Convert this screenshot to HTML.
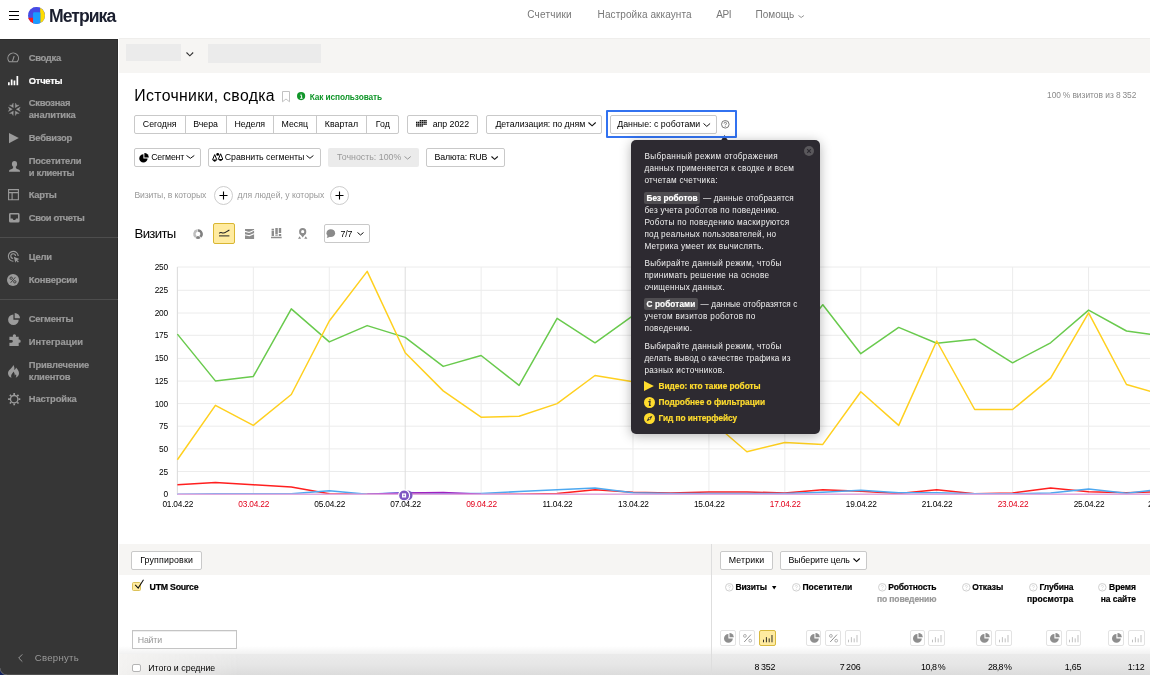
<!DOCTYPE html>
<html lang="ru"><head><meta charset="utf-8"><title>Источники, сводка — Яндекс Метрика</title>
<style>
*{box-sizing:border-box;margin:0;padding:0}
html,body{width:1150px;height:675px;overflow:hidden;background:#fff}
body{font-family:"Liberation Sans",sans-serif;color:#000}
#app{position:relative;width:1150px;height:675px;overflow:hidden;background:#fff;will-change:transform}
#app div,#app span,#app svg.a,#app a,#app button,#app label,#app h1,#app h2,#app input,#app i{position:absolute}
header,aside,main,nav,section{display:block}
.t{white-space:pre;line-height:1;display:block}
svg.a{overflow:visible}
.btn{background:#fff;border:1px solid #c9c9c9;border-radius:2px}
.btn.dis{background:#ebebeb;border:0}
.side-bg{background:#363636}
.sep{background:#4d4d4d;height:1px}
.grayband{background:#f6f5f3}
.ib{border:1px solid #e3e3e3;border-radius:2px;background:#fff}
.ib.sel{background:#ffeba0;border-color:#d8b93f}
</style></head><body><div id="app">
<header><svg class="a" style="left:9px;top:11px" width="10" height="9" viewBox="0 0 10 9"><path d="M0 0.500h10M0 4.500h10M0 8.500h10" stroke="#000" stroke-width="1"/></svg><svg class="a" style="left:27.900px;top:6.800px;border-radius:50%;overflow:hidden" width="17.400" height="17.400" viewBox="0 0 100 100"><rect width="100" height="100" fill="#4350e6"/><rect x="0" y="0" width="100" height="40" fill="#4a46e4" opacity="0.600"/><rect x="0" y="62" width="32" height="40" fill="#ff1a1a"/><rect x="70" y="0" width="30" height="100" fill="#ffdd00"/><rect x="29" y="30" width="42" height="80" rx="7" fill="#1a9bff"/></svg><span class="t" style="left:49.1px;top:7.80px;font-size:17.60px;letter-spacing:-0.983px;font-weight:700;color:#1a1e2e;">Метрика</span><a class="t" style="left:527.3px;top:10.04px;font-size:10.00px;letter-spacing:0.201px;color:#777;">Счетчики</a><a class="t" style="left:597.6px;top:10.04px;font-size:10.00px;letter-spacing:0.086px;color:#777;">Настройка аккаунта</a><a class="t" style="left:716.2px;top:10.04px;font-size:10.00px;letter-spacing:-0.375px;color:#777;">API</a><a class="t" style="left:755.4px;top:10.04px;font-size:10.00px;letter-spacing:0.062px;color:#777;">Помощь</a><svg class="a" style="left:798.0px;top:15.3px" width="6.4" height="3.0" viewBox="0 0 6.4 3.0"><path d="M0.5 0.5 L3.20 2.50 L5.90 0.5" fill="none" stroke="#888" stroke-width="0.90"/></svg></header>
<section><div class="grayband" style="left:119.2px;top:38.0px;width:1030.8px;height:34.8px;border-top:1px solid #efeeec"></div><div style="left:125.5px;top:43.6px;width:55.9px;height:17.7px;background:#ebebeb"></div><div style="left:208.4px;top:43.6px;width:112.3px;height:19.4px;background:#ebebeb"></div><svg class="a" style="left:185.6px;top:52.3px" width="7.7" height="4.3" viewBox="0 0 7.7 4.3"><path d="M0.5 0.5 L3.85 3.80 L7.20 0.5" fill="none" stroke="#333" stroke-width="1.10"/></svg></section>
<main><h1 class="t" style="left:134.3px;top:88.03px;font-size:15.80px;letter-spacing:0.344px;font-weight:400;">Источники, сводка</h1><svg class="a" style="left:282.100px;top:91px" width="8" height="11.600" viewBox="0 0 8 11.600"><path d="M0.500 0.500h7v10.300L4 8 0.500 10.800z" fill="none" stroke="#c2c2c2" stroke-width="1"/></svg><svg class="a" style="left:297.100px;top:92.400px" width="8.200" height="8.200" viewBox="0 0 10 10"><circle cx="5" cy="5" r="5" fill="#11962a"/><path d="M4 4h1.6v3.5M3.8 7.7h3M5 2.2v0.8" stroke="#fff" stroke-width="1.2" fill="none"/></svg><span class="t" style="left:309.7px;top:92.97px;font-size:8.30px;letter-spacing:-0.103px;font-weight:700;color:#11962a;-webkit-text-stroke:0.2px;-webkit-text-stroke:0;">Как использовать</span><span class="t" style="left:1047.0px;top:90.99px;font-size:8.40px;color:#8a8a8a;">100 % визитов из 8 352</span><div class="btn" style="left:134.4px;top:115.2px;width:264.4px;height:18.8px;"></div><span class="t" style="left:134.4px;top:119.95px;font-size:8.80px;width:50.6px;text-align:center;">Сегодня</span><div style="left:184.5px;top:115.2px;width:1.0px;height:18.8px;background:#c9c9c9"></div><span class="t" style="left:185.0px;top:119.95px;font-size:8.80px;width:41.2px;text-align:center;">Вчера</span><div style="left:225.7px;top:115.2px;width:1.0px;height:18.8px;background:#c9c9c9"></div><span class="t" style="left:226.2px;top:119.95px;font-size:8.80px;width:47.2px;text-align:center;">Неделя</span><div style="left:272.9px;top:115.2px;width:1.0px;height:18.8px;background:#c9c9c9"></div><span class="t" style="left:273.4px;top:119.95px;font-size:8.80px;width:42.8px;text-align:center;">Месяц</span><div style="left:315.7px;top:115.2px;width:1.0px;height:18.8px;background:#c9c9c9"></div><span class="t" style="left:316.2px;top:119.95px;font-size:8.80px;width:50.6px;text-align:center;">Квартал</span><div style="left:366.3px;top:115.2px;width:1.0px;height:18.8px;background:#c9c9c9"></div><span class="t" style="left:366.8px;top:119.95px;font-size:8.80px;width:32.0px;text-align:center;">Год</span><div class="btn" style="left:407.2px;top:115.2px;width:70.6px;height:18.8px;"></div><svg class="a" style="left:416px;top:120.100px" width="10.400" height="6.600" viewBox="0 0 10.400 6.600" fill="#111"><rect x="3.70" y="0.00" width="1.500" height="1.400"/><rect x="5.55" y="0.00" width="1.500" height="1.400"/><rect x="7.40" y="0.00" width="1.500" height="1.400"/><rect x="9.25" y="0.00" width="1.500" height="1.400"/><rect x="0.00" y="1.75" width="1.500" height="1.400"/><rect x="1.85" y="1.75" width="1.500" height="1.400"/><rect x="3.70" y="1.75" width="1.500" height="1.400"/><rect x="5.55" y="1.75" width="1.500" height="1.400"/><rect x="7.40" y="1.75" width="1.500" height="1.400"/><rect x="9.25" y="1.75" width="1.500" height="1.400"/><rect x="0.00" y="3.50" width="1.500" height="1.400"/><rect x="1.85" y="3.50" width="1.500" height="1.400"/><rect x="3.70" y="3.50" width="1.500" height="1.400"/><rect x="5.55" y="3.50" width="1.500" height="1.400"/><rect x="7.40" y="3.50" width="1.500" height="1.400"/><rect x="9.25" y="3.50" width="1.500" height="1.400"/><rect x="0.00" y="5.25" width="1.500" height="1.400"/><rect x="1.85" y="5.25" width="1.500" height="1.400"/><rect x="3.70" y="5.25" width="1.500" height="1.400"/><rect x="5.55" y="5.25" width="1.500" height="1.400"/></svg><span class="t" style="left:432.7px;top:119.95px;font-size:8.80px;letter-spacing:-0.033px;">апр 2022</span><div class="btn" style="left:486.3px;top:115.2px;width:115.7px;height:18.8px;"></div><span class="t" style="left:495.4px;top:119.95px;font-size:8.80px;letter-spacing:-0.054px;">Детализация: по дням</span><svg class="a" style="left:587.7px;top:122.3px" width="8.2" height="4.3" viewBox="0 0 8.2 4.3"><path d="M0.5 0.5 L4.10 3.80 L7.70 0.5" fill="none" stroke="#111" stroke-width="1.10"/></svg><svg class="a" style="left:721.100px;top:135px" width="7" height="5.600" viewBox="0 0 7 5.600"><path d="M3.500 0L7 5.600H0z" fill="#2d2a31"/></svg><div style="left:605.6px;top:110.0px;width:131.4px;height:28.4px;border:2px solid #3272f0;border-radius:1px"></div><div class="btn" style="left:609.6px;top:115.2px;width:107.1px;height:18.8px;"></div><span class="t" style="left:617.2px;top:119.95px;font-size:8.80px;letter-spacing:0.015px;">Данные: с роботами</span><svg class="a" style="left:703.0px;top:122.5px" width="7.6" height="3.9" viewBox="0 0 7.6 3.9"><path d="M0.5 0.5 L3.80 3.40 L7.10 0.5" fill="none" stroke="#111" stroke-width="1.00"/></svg><svg class="a" style="left:721.2px;top:120.2px" width="8.6" height="8.6" viewBox="0 0 10 10"><circle cx="5" cy="5" r="4.400" fill="none" stroke="#555" stroke-width="0.900"/><path d="M3.600 4.100c0-1.900 2.800-1.900 2.800-.2 0 1.100-1.400 1.100-1.400 2.300M5 7.200v.9" fill="none" stroke="#555" stroke-width="0.900"/></svg><div class="btn" style="left:134.4px;top:148.4px;width:66.2px;height:18.2px;"></div><svg class="a" style="left:138.600px;top:152.600px" width="9.800" height="9.800" viewBox="0 0 20 20"><path d="M9 2.5A8.5 8.5 0 1 0 17.5 11H9z" fill="#000"/><path d="M11 0a9 9 0 0 1 9 9h-9z" fill="#000"/></svg><span class="t" style="left:151.2px;top:152.95px;font-size:8.80px;letter-spacing:-0.197px;">Сегмент</span><svg class="a" style="left:185.5px;top:155.3px" width="8.8" height="3.8" viewBox="0 0 8.8 3.8"><path d="M0.5 0.5 L4.40 3.30 L8.30 0.5" fill="none" stroke="#111" stroke-width="1.00"/></svg><div class="btn" style="left:208.2px;top:148.4px;width:112.5px;height:18.2px;"></div><svg class="a" style="left:211.800px;top:152px" width="11.400" height="10.400" viewBox="0 0 11.400 10.400"><g fill="none" stroke="#000" stroke-width="1" stroke-linejoin="round"><path d="M2.700 2.600L0.600 7.700Q2.700 10.800 4.800 7.700z"/><path d="M8.600 1.800L6.500 7Q8.600 10.100 10.700 7z"/></g><path d="M0.600 7.600h4.200Q2.700 10.900 0.600 7.600zM6.500 6.900h4.200Q8.600 10.200 6.500 6.900z" fill="#000"/><circle cx="5.700" cy="2.400" r="1.400" fill="#000"/></svg><span class="t" style="left:224.8px;top:152.95px;font-size:8.80px;letter-spacing:-0.041px;">Сравнить сегменты</span><svg class="a" style="left:306.3px;top:155.3px" width="7.9" height="3.8" viewBox="0 0 7.9 3.8"><path d="M0.5 0.5 L3.95 3.30 L7.40 0.5" fill="none" stroke="#111" stroke-width="1.00"/></svg><div class="btn dis" style="left:328.2px;top:148.4px;width:90.8px;height:18.2px;"></div><span class="t" style="left:337.0px;top:152.95px;font-size:8.80px;letter-spacing:0.013px;color:#999;">Точность: 100%</span><svg class="a" style="left:404.3px;top:155.6px" width="7.3" height="3.6" viewBox="0 0 7.3 3.6"><path d="M0.5 0.5 L3.65 3.10 L6.80 0.5" fill="none" stroke="#999" stroke-width="1.00"/></svg><div class="btn" style="left:426.0px;top:148.4px;width:78.6px;height:18.2px;"></div><span class="t" style="left:434.6px;top:152.95px;font-size:8.80px;letter-spacing:-0.181px;">Валюта: RUB</span><svg class="a" style="left:491.2px;top:155.6px" width="7.3" height="3.8" viewBox="0 0 7.3 3.8"><path d="M0.5 0.5 L3.65 3.30 L6.80 0.5" fill="none" stroke="#111" stroke-width="1.10"/></svg><span class="t" style="left:134.4px;top:191.02px;font-size:8.60px;letter-spacing:-0.096px;color:#999;">Визиты, в которых</span><span class="t" style="left:237.5px;top:191.02px;font-size:8.60px;color:#999;">для людей, у которых</span><svg class="a" style="left:214.1px;top:185.8px" width="19" height="19" viewBox="0 0 19 19"><circle cx="9.500" cy="9.500" r="9" fill="#fff" stroke="#c6c6c6" stroke-width="0.900"/><path d="M9.500 5.500v8M5.500 9.500h8" stroke="#000" stroke-width="1.100"/></svg><svg class="a" style="left:330.2px;top:185.8px" width="19" height="19" viewBox="0 0 19 19"><circle cx="9.500" cy="9.500" r="9" fill="#fff" stroke="#c6c6c6" stroke-width="0.900"/><path d="M9.500 5.500v8M5.500 9.500h8" stroke="#000" stroke-width="1.100"/></svg><h2 class="t" style="left:134.5px;top:227.03px;font-size:13.20px;letter-spacing:-0.668px;font-weight:400;">Визиты</h2><svg class="a" style="left:192.6px;top:229.0px" width="10.0" height="10.0" viewBox="0 0 10 10"><path d="M2.94 7.95A3.6 3.6 0 0 1 4.07 1.52" fill="none" stroke="#bebebe" stroke-width="2.500"/><path d="M4.69 1.41A3.6 3.6 0 0 1 7.31 7.76M6.80 8.12A3.6 3.6 0 0 1 3.31 8.18" fill="none" stroke="#808080" stroke-width="2.500"/></svg><div style="left:213.2px;top:223.3px;width:21.7px;height:20.7px;background:#ffeba0;border:1px solid #d9b632;border-radius:2px"></div><svg class="a" style="left:218.8px;top:229.2px" width="10.4" height="8.0" viewBox="0 0 10.400 8"><path d="M0.200 4.400C1.800 2.600 2.400 3.600 3.600 4 5.600 4.600 7 2.800 10.400 1" fill="none" stroke="#222" stroke-width="1.100"/><path d="M0 6.900h10.400" stroke="#222" stroke-width="1"/></svg><svg class="a" style="left:245px;top:228.700px" width="9.100" height="10" viewBox="0 0 9.100 10"><rect width="9.100" height="10" fill="#8c8c8c"/><path d="M-0.500 2.400C1.500 2.200 3 3.600 4.500 3.300S7.500 1.600 9.600 1.300M-0.500 5.700C1.500 5.500 3 6.900 4.500 6.600S7.500 4.900 9.600 4.600" fill="none" stroke="#fff" stroke-width="1.100"/></svg><svg class="a" style="left:271.300px;top:228.100px" width="10.700" height="10.500" viewBox="0 0 10.700 10.500"><path d="M0.600 0.700h2.400v1.200H0.600zM0.600 2.400h2.400v5.500H0.600zM4.300 0h2.500v6.600H4.300zM4.300 7.200h2.500v0.700H4.300zM7.800 0h2.400v5H7.800zM7.800 5.900h2.400v2H7.800zM0 8.800h10.700v1.500H0z" fill="#8c8c8c"/></svg><svg class="a" style="left:297.900px;top:228px" width="9.400" height="10.700" viewBox="0 0 9.400 10.700"><circle cx="4.700" cy="3.700" r="2.600" fill="none" stroke="#8c8c8c" stroke-width="2"/><path d="M1.500 5.300L4.700 9.600 7.900 5.300z" fill="#8c8c8c"/><path d="M0 10.700L1.600 8.200 3.100 10.700zM6.200 10.700L7.800 8.200 9.400 10.700z" fill="#8c8c8c"/></svg><div class="btn" style="left:324.2px;top:224.2px;width:45.5px;height:18.5px;"></div><svg class="a" style="left:325.6px;top:228.6px" width="9.6" height="9.6" viewBox="0 0 10 10"><ellipse cx="5" cy="4.300" rx="4.500" ry="4.100" fill="#8a8a8a"/><path d="M1.800 6.400L0.800 9.400 4.600 8z" fill="#8a8a8a"/></svg><span class="t" style="left:340.5px;top:229.95px;font-size:8.80px;letter-spacing:-0.145px;">7/7</span><svg class="a" style="left:356.5px;top:232.3px" width="7.0" height="3.5" viewBox="0 0 7.0 3.5"><path d="M0.5 0.5 L3.50 3.00 L6.50 0.5" fill="none" stroke="#111" stroke-width="1.00"/></svg><svg class="a" style="left:0;top:255px" width="1150" height="270" viewBox="0 255 1150 270"><g stroke="#ececec" stroke-width="1" fill="none"><path d="M177.4 494.00H1150"/><path d="M177.4 471.50H1150"/><path d="M177.4 448.90H1150"/><path d="M177.4 426.20H1150"/><path d="M177.4 403.60H1150"/><path d="M177.4 381.10H1150"/><path d="M177.4 358.40H1150"/><path d="M177.4 335.30H1150"/><path d="M177.4 313.00H1150"/><path d="M177.4 290.30H1150"/><path d="M177.4 267.00H1150"/><path d="M177.40 267.0V494.0"/><path d="M253.33 267.0V494.0"/><path d="M329.26 267.0V494.0"/><path d="M481.12 267.0V494.0"/><path d="M557.05 267.0V494.0"/><path d="M632.98 267.0V494.0"/><path d="M708.91 267.0V494.0"/><path d="M784.84 267.0V494.0"/><path d="M860.77 267.0V494.0"/><path d="M936.70 267.0V494.0"/><path d="M1012.63 267.0V494.0"/><path d="M1088.56 267.0V494.0"/><path d="M1164.49 267.0V494.0"/></g><path d="M405.19 267.0V494.0" stroke="#dddddd" stroke-width="1" fill="none"/><path d="M177.40 267.0V494.0" stroke="#dcdcdc" stroke-width="1" fill="none"/><polyline points="177.4,334.1 215.4,380.9 253.3,376.4 291.3,308.9 329.3,341.9 367.2,325.6 405.2,337.4 443.2,366.4 481.1,355.5 519.1,385.4 557.1,318.3 595.0,342.8 633.0,315.6 670.9,325.6 708.9,338.3 746.9,349.1 784.8,351.9 822.8,304.7 860.8,353.7 898.7,327.4 936.7,343.3 974.7,339.2 1012.6,362.8 1050.6,342.8 1088.6,310.1 1126.5,331.0 1164.5,336.4" fill="none" stroke="#69ca4d" stroke-width="1.5" stroke-linejoin="round"/><polyline points="177.4,459.8 215.4,405.4 253.3,425.4 291.3,394.5 329.3,321.0 367.2,271.4 405.2,352.8 443.2,390.9 481.1,417.2 519.1,416.3 557.1,403.6 595.0,375.5 633.0,381.8 670.9,401.8 708.9,419.0 746.9,451.7 784.8,442.6 822.8,444.4 860.8,391.8 898.7,425.4 936.7,341.0 974.7,409.5 1012.6,409.5 1050.6,378.2 1088.6,312.9 1126.5,384.5 1164.5,395.4" fill="none" stroke="#ffd01f" stroke-width="1.5" stroke-linejoin="round"/><polyline points="177.4,484.8 215.4,482.5 253.3,484.8 291.3,487.0 329.3,493.8 367.2,494.3 405.2,493.4 443.2,493.4 481.1,494.3 519.1,494.3 557.1,493.4 595.0,489.8 633.0,492.2 670.9,492.9 708.9,492.0 746.9,492.0 784.8,492.9 822.8,489.8 860.8,491.3 898.7,493.4 936.7,489.8 974.7,493.8 1012.6,492.9 1050.6,487.9 1088.6,491.7 1126.5,492.7 1164.5,491.6" fill="none" stroke="#ff1f1f" stroke-width="1.5" stroke-linejoin="round"/><polyline points="177.4,494.3 215.4,493.8 253.3,493.8 291.3,493.8 329.3,490.7 367.2,494.3 405.2,492.5 443.2,493.4 481.1,493.4 519.1,491.6 557.1,489.8 595.0,487.9 633.0,492.7 670.9,493.4 708.9,493.4 746.9,493.4 784.8,493.4 822.8,492.2 860.8,490.3 898.7,492.7 936.7,492.7 974.7,493.8 1012.6,493.8 1050.6,492.9 1088.6,489.1 1126.5,493.2 1164.5,488.9" fill="none" stroke="#4da8f0" stroke-width="1.5" stroke-linejoin="round"/><polyline points="367.2,494.3 405.2,492.9 443.2,492.5 481.1,494.3" fill="none" stroke="#a020c0" stroke-width="1.500" stroke-linejoin="round"/><polyline points="177.4,494.3 215.4,494.3 253.3,494.3 291.3,494.3 329.3,494.3 367.2,494.3 405.2,494.3 443.2,494.3 481.1,494.3 519.1,494.3 557.1,494.3 595.0,494.3 633.0,494.3 670.9,494.3 708.9,494.3 746.9,494.3 784.8,494.3 822.8,494.3 860.8,494.3 898.7,494.3 936.7,494.3 974.7,494.3 1012.6,494.3 1050.6,494.3 1088.6,494.3 1126.5,494.3 1164.5,494.3" fill="none" stroke="#e0a9df" stroke-width="1.4" stroke-linejoin="round"/><circle cx="407.500" cy="495.400" r="5" fill="#7e57c2"/><circle cx="404.100" cy="495.400" r="5.500" fill="#7e57c2" stroke="#fff" stroke-width="1.100"/><rect x="402" y="493.400" width="4.100" height="4.100" fill="#fff"/><rect x="403.400" y="494.700" width="1.300" height="1.500" fill="#7e57c2"/><text x="167.800" y="497.0" text-anchor="end" font-size="8.300" letter-spacing="-0.250" fill="#000">0</text><text x="167.800" y="474.5" text-anchor="end" font-size="8.300" letter-spacing="-0.250" fill="#000">25</text><text x="167.800" y="451.9" text-anchor="end" font-size="8.300" letter-spacing="-0.250" fill="#000">50</text><text x="167.800" y="429.2" text-anchor="end" font-size="8.300" letter-spacing="-0.250" fill="#000">75</text><text x="167.800" y="406.6" text-anchor="end" font-size="8.300" letter-spacing="-0.250" fill="#000">100</text><text x="167.800" y="384.1" text-anchor="end" font-size="8.300" letter-spacing="-0.250" fill="#000">125</text><text x="167.800" y="361.4" text-anchor="end" font-size="8.300" letter-spacing="-0.250" fill="#000">150</text><text x="167.800" y="338.3" text-anchor="end" font-size="8.300" letter-spacing="-0.250" fill="#000">175</text><text x="167.800" y="316.0" text-anchor="end" font-size="8.300" letter-spacing="-0.250" fill="#000">200</text><text x="167.800" y="293.3" text-anchor="end" font-size="8.300" letter-spacing="-0.250" fill="#000">225</text><text x="167.800" y="270.0" text-anchor="end" font-size="8.300" letter-spacing="-0.250" fill="#000">250</text><text x="177.8" y="507" text-anchor="middle" font-size="8.300" letter-spacing="-0.200" fill="#000">01.04.22</text><text x="253.7" y="507" text-anchor="middle" font-size="8.300" letter-spacing="-0.200" fill="#e2001a">03.04.22</text><text x="329.7" y="507" text-anchor="middle" font-size="8.300" letter-spacing="-0.200" fill="#000">05.04.22</text><text x="405.6" y="507" text-anchor="middle" font-size="8.300" letter-spacing="-0.200" fill="#000">07.04.22</text><text x="481.5" y="507" text-anchor="middle" font-size="8.300" letter-spacing="-0.200" fill="#e2001a">09.04.22</text><text x="557.5" y="507" text-anchor="middle" font-size="8.300" letter-spacing="-0.200" fill="#000">11.04.22</text><text x="633.4" y="507" text-anchor="middle" font-size="8.300" letter-spacing="-0.200" fill="#000">13.04.22</text><text x="709.3" y="507" text-anchor="middle" font-size="8.300" letter-spacing="-0.200" fill="#000">15.04.22</text><text x="785.2" y="507" text-anchor="middle" font-size="8.300" letter-spacing="-0.200" fill="#e2001a">17.04.22</text><text x="861.2" y="507" text-anchor="middle" font-size="8.300" letter-spacing="-0.200" fill="#000">19.04.22</text><text x="937.1" y="507" text-anchor="middle" font-size="8.300" letter-spacing="-0.200" fill="#000">21.04.22</text><text x="1013.0" y="507" text-anchor="middle" font-size="8.300" letter-spacing="-0.200" fill="#e2001a">23.04.22</text><text x="1089.0" y="507" text-anchor="middle" font-size="8.300" letter-spacing="-0.200" fill="#000">25.04.22</text><text x="1163.3" y="507" text-anchor="middle" font-size="8.300" letter-spacing="-0.200" fill="#000">27.04.22</text></svg><div class="grayband" style="left:119.2px;top:544.3px;width:1030.8px;height:30.5px;"></div><div class="btn" style="left:131.2px;top:551.3px;width:70.7px;height:18.7px;"></div><span class="t" style="left:140.2px;top:555.95px;font-size:8.80px;letter-spacing:0.152px;">Группировки</span><div class="btn" style="left:720.3px;top:551.3px;width:52.4px;height:18.7px;"></div><span class="t" style="left:728.8px;top:555.95px;font-size:8.80px;letter-spacing:0.111px;">Метрики</span><div class="btn" style="left:780.2px;top:551.3px;width:86.5px;height:18.7px;"></div><span class="t" style="left:788.5px;top:555.95px;font-size:8.80px;letter-spacing:-0.089px;">Выберите цель</span><svg class="a" style="left:852.8px;top:558.1px" width="7.2" height="4.1" viewBox="0 0 7.2 4.1"><path d="M0.5 0.5 L3.60 3.60 L6.70 0.5" fill="none" stroke="#000" stroke-width="1.10"/></svg><div style="left:119.2px;top:646.0px;width:1030.8px;height:8.0px;background:linear-gradient(rgba(0,0,0,0),rgba(0,0,0,.055))"></div><div style="left:119.2px;top:653.7px;width:1030.8px;height:21.3px;background:linear-gradient(to right,rgba(246,245,243,.85),rgba(246,245,243,0) 120px),linear-gradient(#ebebeb,#e6e6e6 50%,#dcdcdc)"></div><div style="left:711.0px;top:544.3px;width:1.0px;height:130.7px;background:#dedede"></div><div style="left:132.1px;top:582.0px;width:8.9px;height:8.9px;background:#ffeba0;border:1px solid #dcc25a;border-radius:1.5px"></div><svg class="a" style="left:133.5px;top:578.5px" width="10.500" height="11.500" viewBox="0 0 10.500 11.500"><path d="M1.200 5.900L4.200 9.100 9.500 0.700" fill="none" stroke="#111" stroke-width="1.050"/></svg><span class="t" style="left:149.6px;top:582.95px;font-size:8.80px;letter-spacing:-0.263px;font-weight:700;-webkit-text-stroke:0.2px;">UTM Source</span><div style="left:132.2px;top:630.0px;width:104.7px;height:18.8px;border:1px solid #c4c4c4;background:#fff;box-shadow:inset 0 1px 0 0 #eee"></div><span class="t" style="left:137.7px;top:635.95px;font-size:8.80px;letter-spacing:-0.162px;color:#999;">Найти</span><div style="left:132.2px;top:663.7px;width:8.4px;height:8.4px;background:#fff;border:1px solid #b4b4b4;border-radius:2px"></div><span class="t" style="left:148.2px;top:663.95px;font-size:8.80px;letter-spacing:0.030px;">Итого и средние</span><svg class="a" style="left:724.8px;top:583.3px" width="8.6" height="8.6" viewBox="0 0 10 10"><circle cx="5" cy="5" r="4.400" fill="#fff" stroke="#cdcdcd" stroke-width="1.100"/><path d="M3.700 4.100c0-1.800 2.600-1.800 2.600-.2 0 1-1.300 1.100-1.300 2.200M5 7.100v.9" fill="none" stroke="#d0d0d0" stroke-width="0.900"/></svg><span class="t" style="left:735.6px;top:583.00px;font-size:8.50px;letter-spacing:-0.175px;font-weight:700;-webkit-text-stroke:0.2px;">Визиты</span><svg class="a" style="left:771.900px;top:586.200px" width="4.400" height="3.700" viewBox="0 0 10 8"><path d="M0 0h10L5 8z" fill="#000"/></svg><svg class="a" style="left:791.9px;top:583.3px" width="8.6" height="8.6" viewBox="0 0 10 10"><circle cx="5" cy="5" r="4.400" fill="#fff" stroke="#cdcdcd" stroke-width="1.100"/><path d="M3.700 4.100c0-1.800 2.600-1.800 2.600-.2 0 1-1.300 1.100-1.300 2.200M5 7.100v.9" fill="none" stroke="#d0d0d0" stroke-width="0.900"/></svg><span class="t" style="left:802.4px;top:583.00px;font-size:8.50px;letter-spacing:0.056px;font-weight:700;-webkit-text-stroke:0.2px;">Посетители</span><svg class="a" style="left:878.1px;top:583.3px" width="8.6" height="8.6" viewBox="0 0 10 10"><circle cx="5" cy="5" r="4.400" fill="#fff" stroke="#cdcdcd" stroke-width="1.100"/><path d="M3.700 4.100c0-1.800 2.600-1.800 2.600-.2 0 1-1.300 1.100-1.300 2.200M5 7.100v.9" fill="none" stroke="#d0d0d0" stroke-width="0.900"/></svg><span class="t" style="left:888.3px;top:583.00px;font-size:8.50px;letter-spacing:-0.127px;font-weight:700;-webkit-text-stroke:0.2px;">Роботность</span><span class="t" style="left:876.9px;top:595.00px;font-size:8.50px;letter-spacing:-0.092px;font-weight:700;color:#999;-webkit-text-stroke:0.2px;">по поведению</span><svg class="a" style="left:961.9px;top:583.3px" width="8.6" height="8.6" viewBox="0 0 10 10"><circle cx="5" cy="5" r="4.400" fill="#fff" stroke="#cdcdcd" stroke-width="1.100"/><path d="M3.700 4.100c0-1.800 2.600-1.800 2.600-.2 0 1-1.300 1.100-1.300 2.200M5 7.100v.9" fill="none" stroke="#d0d0d0" stroke-width="0.900"/></svg><span class="t" style="left:972.2px;top:583.00px;font-size:8.50px;letter-spacing:-0.057px;font-weight:700;-webkit-text-stroke:0.2px;">Отказы</span><svg class="a" style="left:1028.8px;top:583.3px" width="8.6" height="8.6" viewBox="0 0 10 10"><circle cx="5" cy="5" r="4.400" fill="#fff" stroke="#cdcdcd" stroke-width="1.100"/><path d="M3.700 4.100c0-1.800 2.600-1.800 2.600-.2 0 1-1.300 1.100-1.300 2.200M5 7.100v.9" fill="none" stroke="#d0d0d0" stroke-width="0.900"/></svg><span class="t" style="left:1039.6px;top:583.00px;font-size:8.50px;letter-spacing:-0.136px;font-weight:700;-webkit-text-stroke:0.2px;">Глубина</span><span class="t" style="left:1027.0px;top:595.00px;font-size:8.50px;letter-spacing:0.114px;font-weight:700;-webkit-text-stroke:0.2px;">просмотра</span><svg class="a" style="left:1098.2px;top:583.3px" width="8.6" height="8.6" viewBox="0 0 10 10"><circle cx="5" cy="5" r="4.400" fill="#fff" stroke="#cdcdcd" stroke-width="1.100"/><path d="M3.700 4.100c0-1.800 2.600-1.800 2.600-.2 0 1-1.300 1.100-1.300 2.200M5 7.100v.9" fill="none" stroke="#d0d0d0" stroke-width="0.900"/></svg><span class="t" style="left:1109.1px;top:583.00px;font-size:8.50px;letter-spacing:-0.081px;font-weight:700;-webkit-text-stroke:0.2px;">Время</span><span class="t" style="left:1100.8px;top:595.00px;font-size:8.50px;letter-spacing:-0.101px;font-weight:700;-webkit-text-stroke:0.2px;">на сайте</span><div class="ib" style="left:720.3px;top:630.2px;width:15.3px;height:15.6px;"></div><svg class="a" style="left:723.8px;top:633.2px" width="9.8" height="9.8" viewBox="0 0 9.800 9.800"><path d="M4.400 1A4.400 4.400 0 1 0 8.800 5.400H4.400z" fill="#8e8e8e"/><path d="M5.500 0A4.300 4.300 0 0 1 9.800 4.300H5.500z" fill="#8e8e8e"/></svg><div class="ib" style="left:739.2px;top:630.2px;width:15.5px;height:15.6px;"></div><svg class="a" style="left:743.2px;top:634.2px" width="8.8" height="8.4" viewBox="0 0 8.800 8.400"><path d="M8 0.600L1.200 8" stroke="#858585" stroke-width="0.900"/><circle cx="1.900" cy="1.900" r="1.400" fill="none" stroke="#a5a5a5" stroke-width="0.900"/><circle cx="7.200" cy="6.700" r="1.400" fill="none" stroke="#a5a5a5" stroke-width="0.900"/></svg><div class="ib sel" style="left:759.0px;top:630.2px;width:16.6px;height:15.6px;"></div><svg class="a" style="left:762.6px;top:634.6px" width="9.5" height="7.3" viewBox="0 0 9.500 7.300"><path d="M0.500 7.300V4.700M3.400 7.300V2.100M6.200 7.300V3.400M9 7.300V0" stroke="#1a1a1a" stroke-width="0.9"/></svg><div class="ib" style="left:806.1px;top:630.2px;width:15.4px;height:15.6px;"></div><svg class="a" style="left:809.6px;top:633.2px" width="9.8" height="9.8" viewBox="0 0 9.800 9.800"><path d="M4.400 1A4.400 4.400 0 1 0 8.800 5.400H4.400z" fill="#8e8e8e"/><path d="M5.500 0A4.300 4.300 0 0 1 9.800 4.300H5.500z" fill="#8e8e8e"/></svg><div class="ib" style="left:825.2px;top:630.2px;width:15.6px;height:15.6px;"></div><svg class="a" style="left:829.2px;top:634.2px" width="8.8" height="8.4" viewBox="0 0 8.800 8.400"><path d="M8 0.600L1.200 8" stroke="#858585" stroke-width="0.900"/><circle cx="1.900" cy="1.900" r="1.400" fill="none" stroke="#a5a5a5" stroke-width="0.900"/><circle cx="7.200" cy="6.700" r="1.400" fill="none" stroke="#a5a5a5" stroke-width="0.900"/></svg><div class="ib" style="left:844.5px;top:630.2px;width:16.0px;height:15.6px;"></div><svg class="a" style="left:847.9px;top:634.6px" width="9.5" height="7.3" viewBox="0 0 9.500 7.300"><path d="M0.500 7.300V4.700M3.400 7.300V2.100M6.200 7.300V3.400M9 7.300V0" stroke="#b0b0b0" stroke-width="0.8"/></svg><div class="ib" style="left:909.7px;top:630.2px;width:15.6px;height:15.6px;"></div><svg class="a" style="left:913.3px;top:633.2px" width="9.8" height="9.8" viewBox="0 0 9.800 9.800"><path d="M4.400 1A4.400 4.400 0 1 0 8.800 5.400H4.400z" fill="#8e8e8e"/><path d="M5.500 0A4.300 4.300 0 0 1 9.800 4.300H5.500z" fill="#8e8e8e"/></svg><div class="ib" style="left:928.4px;top:630.2px;width:17.1px;height:15.6px;"></div><svg class="a" style="left:932.3px;top:634.6px" width="9.5" height="7.3" viewBox="0 0 9.500 7.300"><path d="M0.500 7.300V4.700M3.400 7.300V2.100M6.200 7.300V3.400M9 7.300V0" stroke="#b0b0b0" stroke-width="0.8"/></svg><div class="ib" style="left:976.4px;top:630.2px;width:15.3px;height:15.6px;"></div><svg class="a" style="left:979.9px;top:633.2px" width="9.8" height="9.8" viewBox="0 0 9.800 9.800"><path d="M4.400 1A4.400 4.400 0 1 0 8.800 5.400H4.400z" fill="#8e8e8e"/><path d="M5.500 0A4.300 4.300 0 0 1 9.800 4.300H5.500z" fill="#8e8e8e"/></svg><div class="ib" style="left:995.4px;top:630.2px;width:16.3px;height:15.6px;"></div><svg class="a" style="left:998.9px;top:634.6px" width="9.5" height="7.3" viewBox="0 0 9.500 7.300"><path d="M0.500 7.300V4.700M3.400 7.300V2.100M6.200 7.300V3.400M9 7.300V0" stroke="#b0b0b0" stroke-width="0.8"/></svg><div class="ib" style="left:1046.3px;top:630.2px;width:15.3px;height:15.6px;"></div><svg class="a" style="left:1049.7px;top:633.2px" width="9.8" height="9.8" viewBox="0 0 9.800 9.800"><path d="M4.400 1A4.400 4.400 0 1 0 8.800 5.400H4.400z" fill="#8e8e8e"/><path d="M5.500 0A4.300 4.300 0 0 1 9.800 4.300H5.500z" fill="#8e8e8e"/></svg><div class="ib" style="left:1065.5px;top:630.2px;width:15.8px;height:15.6px;"></div><svg class="a" style="left:1068.8px;top:634.6px" width="9.5" height="7.3" viewBox="0 0 9.500 7.300"><path d="M0.500 7.300V4.700M3.400 7.300V2.100M6.200 7.300V3.400M9 7.300V0" stroke="#b0b0b0" stroke-width="0.8"/></svg><div class="ib" style="left:1108.4px;top:630.2px;width:15.3px;height:15.6px;"></div><svg class="a" style="left:1111.9px;top:633.2px" width="9.8" height="9.8" viewBox="0 0 9.800 9.800"><path d="M4.400 1A4.400 4.400 0 1 0 8.800 5.400H4.400z" fill="#8e8e8e"/><path d="M5.500 0A4.300 4.300 0 0 1 9.800 4.300H5.500z" fill="#8e8e8e"/></svg><div class="ib" style="left:1128.1px;top:630.2px;width:16.6px;height:15.6px;"></div><svg class="a" style="left:1131.8px;top:634.6px" width="9.5" height="7.3" viewBox="0 0 9.500 7.300"><path d="M0.500 7.300V4.700M3.400 7.300V2.100M6.200 7.300V3.400M9 7.300V0" stroke="#b0b0b0" stroke-width="0.8"/></svg><span class="t" style="left:754.5px;top:662.97px;font-size:8.90px;letter-spacing:-0.166px;">8 352</span><span class="t" style="left:839.7px;top:662.97px;font-size:8.90px;letter-spacing:-0.146px;">7 206</span><span class="t" style="left:921.1px;top:662.97px;font-size:8.90px;letter-spacing:-0.476px;">10,8 %</span><span class="t" style="left:988.1px;top:662.97px;font-size:8.90px;letter-spacing:-0.609px;">28,8 %</span><span class="t" style="left:1064.8px;top:662.97px;font-size:8.90px;letter-spacing:-0.195px;">1,65</span><span class="t" style="left:1127.8px;top:662.97px;font-size:8.90px;letter-spacing:-0.120px;">1:12</span></main>
<aside><div class="side-bg" style="left:0.0px;top:39.0px;width:118.0px;height:636.0px;border-top:1px solid #2c2c2c;border-right:1px solid #2d2d2d;border-bottom:1px solid #505050"></div><a class="t" style="left:28.8px;top:53.04px;font-size:9.40px;letter-spacing:-0.313px;font-weight:700;color:#9a9a9a;-webkit-text-stroke:0.2px;">Сводка</a><a class="t" style="left:28.8px;top:76.04px;font-size:9.40px;letter-spacing:-0.269px;font-weight:700;color:#fff;-webkit-text-stroke:0.2px;">Отчеты</a><a class="t" style="left:28.8px;top:98.04px;font-size:9.40px;letter-spacing:-0.290px;font-weight:700;color:#9a9a9a;-webkit-text-stroke:0.2px;">Сквозная</a><a class="t" style="left:28.8px;top:110.04px;font-size:9.40px;letter-spacing:-0.142px;font-weight:700;color:#9a9a9a;-webkit-text-stroke:0.2px;">аналитика</a><a class="t" style="left:28.8px;top:133.04px;font-size:9.40px;letter-spacing:-0.233px;font-weight:700;color:#9a9a9a;-webkit-text-stroke:0.2px;">Вебвизор</a><a class="t" style="left:28.8px;top:156.04px;font-size:9.40px;letter-spacing:-0.193px;font-weight:700;color:#9a9a9a;-webkit-text-stroke:0.2px;">Посетители</a><a class="t" style="left:28.8px;top:168.04px;font-size:9.40px;letter-spacing:-0.342px;font-weight:700;color:#9a9a9a;-webkit-text-stroke:0.2px;">и клиенты</a><a class="t" style="left:28.8px;top:190.04px;font-size:9.40px;letter-spacing:-0.313px;font-weight:700;color:#9a9a9a;-webkit-text-stroke:0.2px;">Карты</a><a class="t" style="left:28.8px;top:213.04px;font-size:9.40px;letter-spacing:-0.376px;font-weight:700;color:#9a9a9a;-webkit-text-stroke:0.2px;">Свои отчеты</a><a class="t" style="left:28.8px;top:252.04px;font-size:9.40px;letter-spacing:-0.227px;font-weight:700;color:#9a9a9a;-webkit-text-stroke:0.2px;">Цели</a><a class="t" style="left:28.8px;top:275.04px;font-size:9.40px;letter-spacing:-0.204px;font-weight:700;color:#9a9a9a;-webkit-text-stroke:0.2px;">Конверсии</a><a class="t" style="left:28.8px;top:314.04px;font-size:9.40px;letter-spacing:-0.239px;font-weight:700;color:#9a9a9a;-webkit-text-stroke:0.2px;">Сегменты</a><a class="t" style="left:28.8px;top:337.04px;font-size:9.40px;letter-spacing:-0.014px;font-weight:700;color:#9a9a9a;-webkit-text-stroke:0.2px;">Интеграции</a><a class="t" style="left:28.8px;top:360.04px;font-size:9.40px;letter-spacing:-0.144px;font-weight:700;color:#9a9a9a;-webkit-text-stroke:0.2px;">Привлечение</a><a class="t" style="left:28.8px;top:372.04px;font-size:9.40px;letter-spacing:-0.220px;font-weight:700;color:#9a9a9a;-webkit-text-stroke:0.2px;">клиентов</a><a class="t" style="left:28.8px;top:394.04px;font-size:9.40px;letter-spacing:-0.125px;font-weight:700;color:#9a9a9a;-webkit-text-stroke:0.2px;">Настройка</a><svg class="a" style="left:7.3px;top:51.9px" width="12.4" height="10.4" viewBox="0 0 12.8 10.8"><path d="M2.200 10.100A5.500 5.500 0 1 1 10.600 10.100z" fill="none" stroke="#9b9b9b" stroke-width="1.100" stroke-linejoin="round"/><path d="M5.600 9.800L7.400 4.200" stroke="#9b9b9b" stroke-width="1.100" fill="none"/></svg><svg class="a" style="left:8.1px;top:76.0px" width="10.4" height="9.2" viewBox="0 0 10.4 9.2"><path d="M0 6.200h1.700v3H0zM2.800 3.500h1.700v5.700H2.800zM5.600 4.600h1.700v4.600H5.600zM8.500 0h1.700v9.200H8.500z" fill="#fff"/></svg><svg class="a" style="left:7.6px;top:102.7px" width="12.6" height="12.6" viewBox="0 0 12.6 12.6"><path d="M8.20 6.30L12.31 8.49L11.10 6.30L12.31 4.11zM7.25 7.95L7.41 12.60L8.70 10.46L11.20 10.41zM5.35 7.95L1.40 10.41L3.90 10.46L5.19 12.60zM4.40 6.30L0.29 4.11L1.50 6.30L0.29 8.49zM5.35 4.65L5.19 -0.00L3.90 2.14L1.40 2.19zM7.25 4.65L11.20 2.19L8.70 2.14L7.41 -0.00z" fill="#9b9b9b" stroke="#9b9b9b" stroke-width="0.300" stroke-linejoin="round"/></svg><svg class="a" style="left:9.0px;top:133.0px" width="9.8" height="10.2" viewBox="0 0 9.8 10.2"><path d="M0 0L9.800 5.100 0 10.200z" fill="#9b9b9b"/></svg><svg class="a" style="left:9.0px;top:161.2px" width="11.0" height="10.8" viewBox="0 0 11.0 10.8"><ellipse cx="5.500" cy="2.900" rx="2.600" ry="2.900" fill="#9b9b9b"/><path d="M4.300 5h2.400c0 2.300 0.600 2.900 2.800 3.500 1 0.300 1.500 0.800 1.500 2.300H0c0-1.500 0.500-2 1.500-2.300C3.700 7.900 4.300 7.300 4.300 5z" fill="#9b9b9b"/></svg><svg class="a" style="left:8.2px;top:189.2px" width="11.0" height="11.4" viewBox="0 0 11.0 11.4"><path d="M0.600 0.600h9.800v10.200H0.600zM0.600 3.600h9.800M4.100 3.600v7.200" fill="none" stroke="#9b9b9b" stroke-width="1.100"/></svg><svg class="a" style="left:8.6px;top:213.0px" width="10.6" height="9.6" viewBox="0 0 10.6 9.6"><path fill-rule="evenodd" d="M1.500 0h7.600a1.500 1.500 0 0 1 1.500 1.500v6.600a1.500 1.500 0 0 1-1.500 1.500H1.500A1.500 1.500 0 0 1 0 8.100V1.500A1.500 1.500 0 0 1 1.500 0zM1.600 1.600v3.800h1.900l0.900 1.500h1.800l0.900-1.500h1.900V1.600z" fill="#9b9b9b"/></svg><svg class="a" style="left:7.6px;top:251.3px" width="11.6" height="11.6" viewBox="0 0 11.6 11.6"><path d="M5.400 10.200A4.900 4.900 0 1 1 10.200 5" fill="none" stroke="#9b9b9b" stroke-width="1.100"/><path d="M5.100 7.500A2.400 2.400 0 1 1 7.600 4.900" fill="none" stroke="#9b9b9b" stroke-width="1.100"/><path d="M5.800 5.800l5.600 2.200-2.300 0.900 1.700 1.700-0.800 0.800-1.700-1.700-0.900 2.100z" fill="#9b9b9b"/></svg><svg class="a" style="left:7.3px;top:273.6px" width="12.0" height="12.0" viewBox="0 0 12.0 12.0"><circle cx="6" cy="6" r="6" fill="#9b9b9b"/><path d="M8.300 3.300L3.700 8.700" stroke="#363636" stroke-width="0.900"/><circle cx="4.200" cy="4.200" r="1.200" fill="none" stroke="#363636" stroke-width="0.900"/><circle cx="7.800" cy="7.800" r="1.200" fill="none" stroke="#363636" stroke-width="0.900"/></svg><svg class="a" style="left:7.6px;top:312.7px" width="12.0" height="12.0" viewBox="0 0 12.0 12.0"><path d="M5.400 1.400A5.300 5.300 0 1 0 10.700 6.700H5.400z" fill="#9b9b9b"/><path d="M6.700 0A5.300 5.300 0 0 1 12 5.300H6.700z" fill="#9b9b9b"/></svg><svg class="a" style="left:8.7px;top:334.0px" width="12.6" height="12.0" viewBox="0 0 12.6 12.0"><path d="M0.400 2.700H4A1.600 1.600 0 1 1 6.800 2.700H9.700V5.600A1.600 1.600 0 1 1 9.700 8.700V12H0.400V8.800H2.400A1.300 1.300 0 1 0 2.400 5.900H0.400z" fill="#9b9b9b"/></svg><svg class="a" style="left:8.3px;top:365.3px" width="11.0" height="12.7" viewBox="0 0 11.0 12.7"><path fill-rule="evenodd" d="M5.300 0C6.500 1.700 6.600 3.300 6.200 5 7.300 4.600 7.900 3.600 8 2.500 10 4.400 11 6.400 11 8.300c0 2.300-1.400 3.900-3.300 4.400 0.700-1 0.800-2.300 0.200-3.400-0.300 0.700-0.700 1-1.200 1.200 0.200-1.500-0.200-2.800-1.300-4-0.100 1.500-2.300 2.500-2.300 4.500 0 0.700 0.200 1.300 0.500 1.700C1.500 12.200 0 10.500 0 8.200 0 4.800 4.200 3.500 5.300 0z" fill="#9b9b9b"/></svg><svg class="a" style="left:7.6px;top:392.9px" width="12.4" height="12.4" viewBox="0 0 12.4 12.4"><circle cx="6.200" cy="6.200" r="3.700" fill="none" stroke="#9b9b9b" stroke-width="1.300"/><path d="M10.50 6.20L12.30 6.20M9.24 9.24L10.51 10.51M6.20 10.50L6.20 12.30M3.16 9.24L1.89 10.51M1.90 6.20L0.10 6.20M3.16 3.16L1.89 1.89M6.20 1.90L6.20 0.10M9.24 3.16L10.51 1.89" stroke="#9b9b9b" stroke-width="1.700"/></svg><div class="sep" style="left:0.0px;top:237.3px;width:118.2px;height:1.0px;"></div><div class="sep" style="left:0.0px;top:298.8px;width:118.2px;height:1.0px;"></div><span class="t" style="left:34.8px;top:652.97px;font-size:9.60px;letter-spacing:0.265px;color:#9a9a9a;">Свернуть</span><svg class="a" style="left:17.700px;top:654.200px" width="4.800" height="8" viewBox="0 0 4.800 8"><path d="M4.300 0.400L0.700 4l3.600 3.600" fill="none" stroke="#9a9a9a" stroke-width="1"/></svg></aside>
<div style="left:631.0px;top:140.2px;width:188.8px;height:293.4px;background:#2d2a31;border-radius:5px;box-shadow:0 2px 12px rgba(0,0,0,.3)"></div><svg class="a" style="left:803.900px;top:146.100px" width="10" height="10" viewBox="0 0 10 10"><circle cx="5" cy="5" r="5" fill="#5a585c"/><path d="M3.200 3.200l3.600 3.600M6.800 3.200L3.200 6.800" stroke="#2d2a31" stroke-width="1.100"/></svg><span class="t" style="left:644.4px;top:152.76px;font-size:8.20px;letter-spacing:0.366px;color:#f0f0f0;">Выбранный режим отображения</span><span class="t" style="left:644.4px;top:164.76px;font-size:8.20px;letter-spacing:0.250px;color:#f0f0f0;">данных применяется к сводке и всем</span><span class="t" style="left:644.4px;top:176.76px;font-size:8.20px;letter-spacing:0.293px;color:#f0f0f0;">отчетам счетчика:</span><span class="t" style="left:644.4px;top:206.76px;font-size:8.20px;letter-spacing:0.259px;color:#f0f0f0;">без учета роботов по поведению.</span><span class="t" style="left:644.4px;top:218.76px;font-size:8.20px;letter-spacing:0.310px;color:#f0f0f0;">Роботы по поведению маскируются</span><span class="t" style="left:644.4px;top:230.76px;font-size:8.20px;letter-spacing:0.216px;color:#f0f0f0;">под реальных пользователей, но</span><span class="t" style="left:644.4px;top:242.76px;font-size:8.20px;letter-spacing:0.257px;color:#f0f0f0;">Метрика умеет их вычислять.</span><span class="t" style="left:644.4px;top:259.76px;font-size:8.20px;letter-spacing:0.314px;color:#f0f0f0;">Выбирайте данный режим, чтобы</span><span class="t" style="left:644.4px;top:271.76px;font-size:8.20px;letter-spacing:0.293px;color:#f0f0f0;">принимать решение на основе</span><span class="t" style="left:644.4px;top:283.76px;font-size:8.20px;letter-spacing:0.250px;color:#f0f0f0;">очищенных данных.</span><span class="t" style="left:644.4px;top:312.76px;font-size:8.20px;letter-spacing:0.334px;color:#f0f0f0;">учетом визитов роботов по</span><span class="t" style="left:644.4px;top:324.76px;font-size:8.20px;letter-spacing:0.343px;color:#f0f0f0;">поведению.</span><span class="t" style="left:644.4px;top:342.76px;font-size:8.20px;letter-spacing:0.314px;color:#f0f0f0;">Выбирайте данный режим, чтобы</span><span class="t" style="left:644.4px;top:354.76px;font-size:8.20px;letter-spacing:0.179px;color:#f0f0f0;">делать вывод о качестве трафика из</span><span class="t" style="left:644.4px;top:366.76px;font-size:8.20px;letter-spacing:0.341px;color:#f0f0f0;">разных источников.</span><div style="left:643.9px;top:192.3px;width:56.0px;height:11.8px;background:#504e52;border-radius:2px"></div><span class="t" style="left:646.5px;top:194.76px;font-size:8.20px;letter-spacing:0.038px;font-weight:700;color:#fff;-webkit-text-stroke:0.2px;">Без роботов</span><span class="t" style="left:703.0px;top:194.76px;font-size:8.20px;letter-spacing:0.124px;color:#f0f0f0;">— данные отобразятся</span><div style="left:643.9px;top:298.2px;width:53.8px;height:11.8px;background:#504e52;border-radius:2px"></div><span class="t" style="left:646.5px;top:300.76px;font-size:8.20px;letter-spacing:0.120px;font-weight:700;color:#fff;-webkit-text-stroke:0.2px;">С роботами</span><span class="t" style="left:700.6px;top:300.76px;font-size:8.20px;letter-spacing:0.105px;color:#f0f0f0;">— данные отобразятся с</span><svg class="a" style="left:644.200px;top:380.900px" width="9.900" height="10" viewBox="0 0 10 10"><path d="M0 0L10 5 0 10z" fill="#ffdc2e"/></svg><span class="t" style="left:658.6px;top:381.97px;font-size:8.30px;letter-spacing:-0.031px;font-weight:700;color:#ffdc2e;-webkit-text-stroke:0.2px;">Видео: кто такие роботы</span><svg class="a" style="left:644.100px;top:397px" width="11" height="11" viewBox="0 0 10 10"><circle cx="5" cy="5" r="5" fill="#ffdc2e"/><path d="M4 4.200h1.500l-0.500 3.400h1.200M5.400 2.100v1" stroke="#2d2a31" stroke-width="1.100" fill="none"/></svg><span class="t" style="left:658.6px;top:397.97px;font-size:8.30px;font-weight:700;color:#ffdc2e;-webkit-text-stroke:0.2px;">Подробнее о фильтрации</span><svg class="a" style="left:644.100px;top:413.100px" width="11" height="11" viewBox="0 0 10 10"><circle cx="5" cy="5" r="5" fill="#ffdc2e"/><path d="M7.600 2.400L6 6 2.400 7.600 4 4z" fill="#2d2a31"/><circle cx="5" cy="5" r="0.800" fill="#ffdc2e"/></svg><span class="t" style="left:658.6px;top:413.97px;font-size:8.30px;letter-spacing:-0.060px;font-weight:700;color:#ffdc2e;-webkit-text-stroke:0.2px;">Гид по интерфейсу</span>
<svg class="a" style="left:0;top:668px" width="8" height="7" viewBox="0 0 8 7"><path d="M0 0v7h7A7 7 0 0 1 0 0z" fill="#15245f"/><path d="M0 0A7 7 0 0 0 7 7" fill="none" stroke="#777" stroke-width="0.800"/></svg>
</div></body></html>
